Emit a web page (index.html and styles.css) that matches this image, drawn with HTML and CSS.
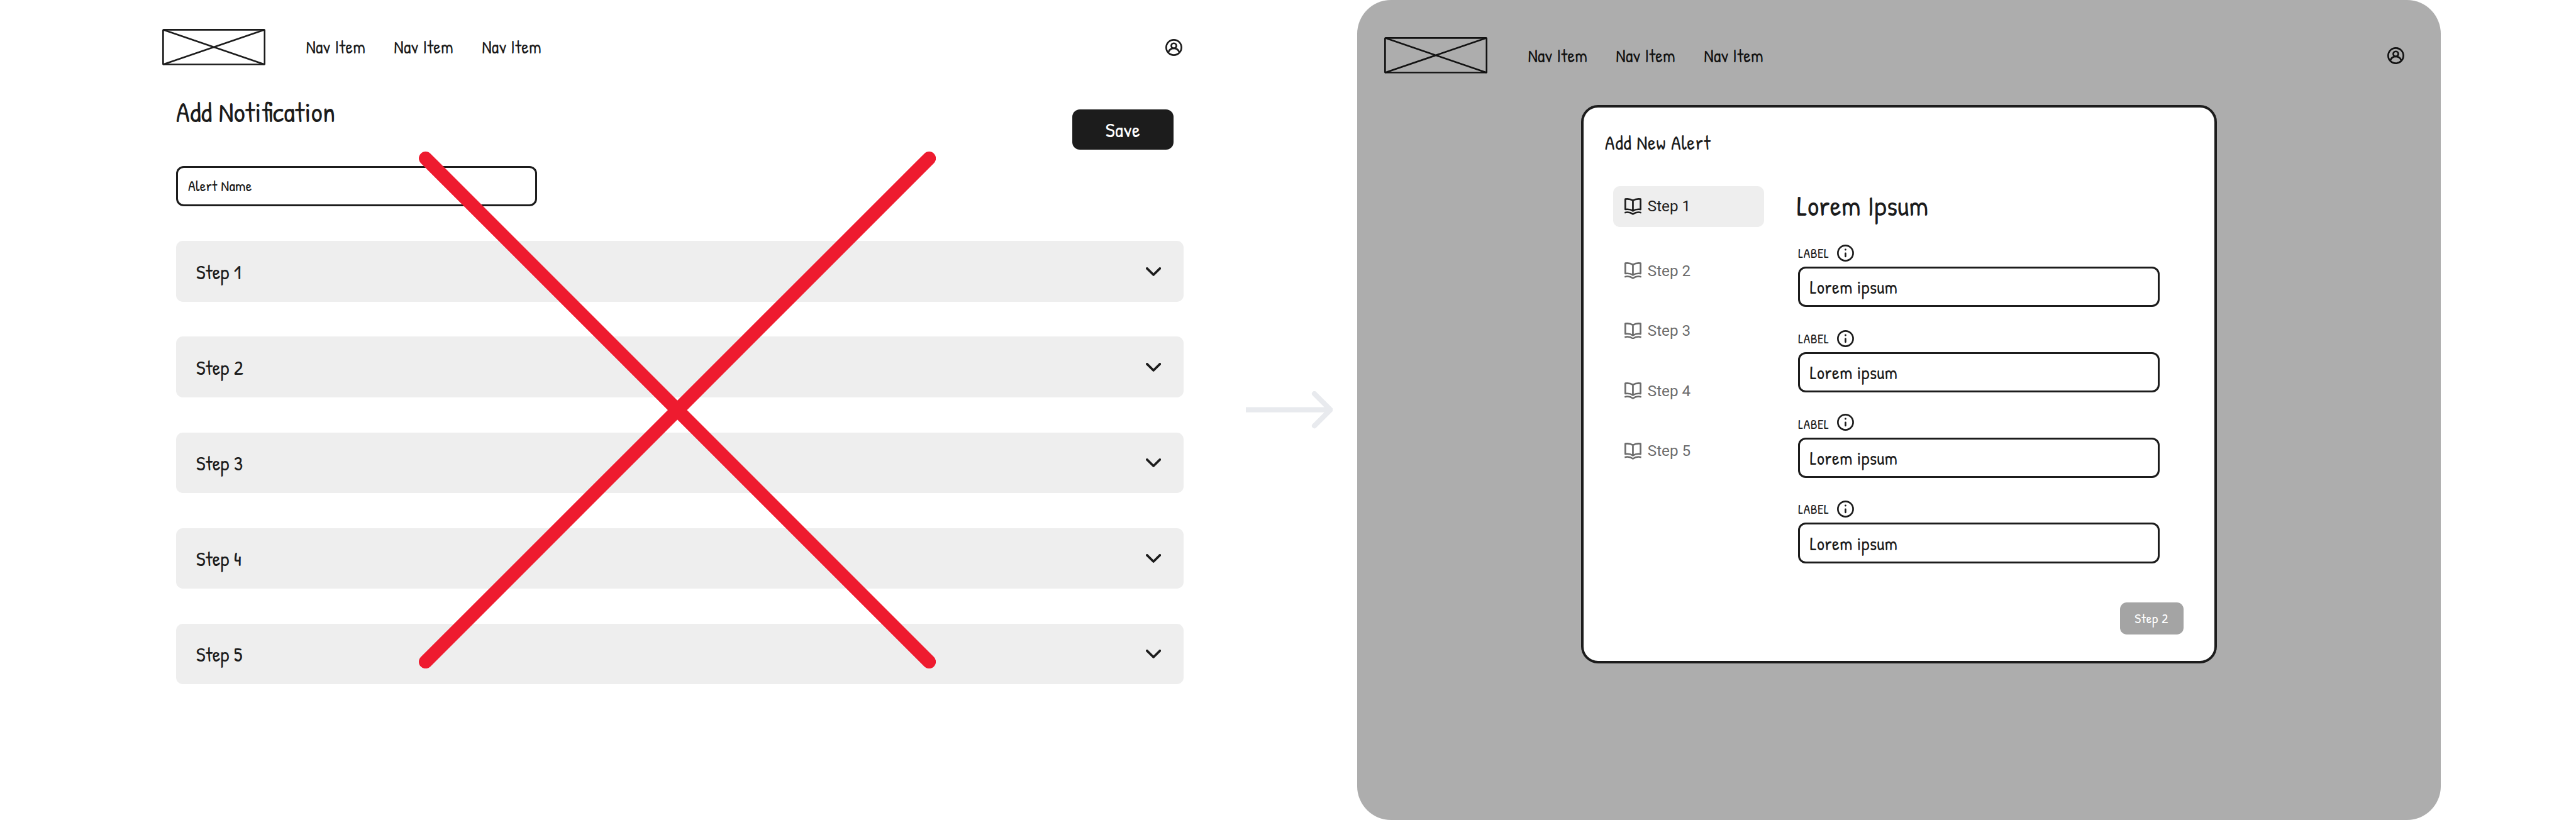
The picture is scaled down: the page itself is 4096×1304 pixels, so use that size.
FILE: index.html
```html
<!DOCTYPE html>
<html lang="en">
<head>
<meta charset="utf-8">
<title>Add alert flow</title>
<link rel="stylesheet" href="styles.css">
</head>
<body>
<svg class="sprite" aria-hidden="true">
  <symbol id="logo" viewBox="0 0 244 86">
    <rect x="2" y="2" width="240" height="82" rx="2" fill="none" stroke="currentColor" stroke-width="4"/>
    <path d="M2 2 242 84M242 2 2 84" stroke="currentColor" stroke-width="4"/>
  </symbol>
  <symbol id="user" viewBox="0 0 20 20">
    <g fill="none" stroke="currentColor" stroke-width="2">
      <circle cx="10" cy="10" r="9"/>
      <circle cx="10" cy="8" r="3"/>
      <path d="M3.7 15.2C4.8 12.7 7.2 11.1 10 11.1s5.2 1.6 6.3 4.1"/>
    </g>
  </symbol>
  <symbol id="book" viewBox="0 0 20 20">
    <g fill="none" stroke="currentColor" stroke-width="2" stroke-linejoin="round">
      <path d="M10 2.9C7.600 1.400 4.200.7 1 1.200V13.400C4.200 12.900 7.600 13.500 10 15.100 12.400 13.500 15.800 12.900 19 13.400V1.200C15.800.7 12.400 1.400 10 2.900ZM10 2.900V15"/>
      <path d="M.2 17.200C4 16.300 7.300 16.900 10 18.900 12.700 16.900 16 16.300 19.800 17.200" stroke-width="1.900"/>
    </g>
  </symbol>
  <symbol id="info" viewBox="0 0 20 20">
    <circle cx="10" cy="10" r="9" fill="none" stroke="currentColor" stroke-width="2"/>
    <circle cx="10" cy="6" r="1.100" fill="currentColor"/>
    <path d="M10 10.200V14" stroke="currentColor" stroke-width="2" stroke-linecap="round"/>
  </symbol>
  <symbol id="chevron" viewBox="0 0 36 21">
    <path d="M2.800 2.800 18 17.800 33.200 2.800" fill="none" stroke="currentColor" stroke-width="5.500" stroke-linecap="round" stroke-linejoin="round"/>
  </symbol>
</svg>

<main class="board">
  <section class="screen before">
    <header class="topbar">
      <svg class="logo"><use href="#logo"/></svg>
      <nav class="nav"><a>Nav Item</a><a>Nav Item</a><a>Nav Item</a></nav>
      <svg class="icon"><use href="#user"/></svg>
    </header>
    <div class="content">
      <div class="title-row">
        <h1 class="page-title">Add Notification</h1>
        <button class="save">Save</button>
      </div>
      <div class="input alert-name">Alert Name</div>
      <div class="panel">Step 1<svg class="chevron"><use href="#chevron"/></svg></div>
      <div class="panel">Step 2<svg class="chevron"><use href="#chevron"/></svg></div>
      <div class="panel">Step 3<svg class="chevron"><use href="#chevron"/></svg></div>
      <div class="panel">Step 4<svg class="chevron"><use href="#chevron"/></svg></div>
      <div class="panel">Step 5<svg class="chevron"><use href="#chevron"/></svg></div>
    </div>
    <svg class="cross" viewBox="0 0 1222 1222"><path d="M16 16 1206 1206M1206 16 16 1206"/></svg>
  </section>

  <svg class="arrow" viewBox="0 0 206 88"><path d="M0 44H200"/><path d="M162 6 200 44 162 82" stroke-linecap="round"/></svg>

  <section class="screen after">
    <header class="topbar">
      <svg class="logo"><use href="#logo"/></svg>
      <nav class="nav"><a>Nav Item</a><a>Nav Item</a><a>Nav Item</a></nav>
      <svg class="icon"><use href="#user"/></svg>
    </header>
    <div class="modal">
      <h2 class="modal-title">Add New Alert</h2>
      <div class="modal-body">
        <ul class="steps">
          <li class="step active"><svg class="icon"><use href="#book"/></svg>Step 1</li>
          <li class="step"><svg class="icon"><use href="#book"/></svg>Step 2</li>
          <li class="step"><svg class="icon"><use href="#book"/></svg>Step 3</li>
          <li class="step"><svg class="icon"><use href="#book"/></svg>Step 4</li>
          <li class="step"><svg class="icon"><use href="#book"/></svg>Step 5</li>
        </ul>
        <form class="form">
          <h3 class="form-title">Lorem Ipsum</h3>
          <div class="field">
            <div class="label-row"><label>LABEL</label><svg class="icon"><use href="#info"/></svg></div>
            <div class="input">Lorem ipsum</div>
          </div>
          <div class="field">
            <div class="label-row"><label>LABEL</label><svg class="icon"><use href="#info"/></svg></div>
            <div class="input">Lorem ipsum</div>
          </div>
          <div class="field">
            <div class="label-row"><label>LABEL</label><svg class="icon raised"><use href="#info"/></svg></div>
            <div class="input">Lorem ipsum</div>
          </div>
          <div class="field">
            <div class="label-row"><label>LABEL</label><svg class="icon"><use href="#info"/></svg></div>
            <div class="input">Lorem ipsum</div>
          </div>
        </form>
      </div>
      <div class="modal-footer"><button class="next">Step 2</button></div>
    </div>
  </section>
</main>
</body>
</html>
```
FILE: styles.css
```css
/* 1rem is ten design units; the board is 6088 units wide */
html {
  font-size: 6.728px;
}

*,
*::before {
  box-sizing: border-box;
}

body {
  margin: 0;
  background: #fff;
  color: #1c1c1c;
  font-family: "Patrick Hand", Lato, sans-serif;
  overflow: hidden;
}

h1, h2, h3, ul {
  margin: 0;
  padding: 0;
  font-weight: 400;
}

button {
  border: 0;
  padding: 0;
  font-family: inherit;
  color: #fff;
}

svg {
  display: block;
  flex: none;
}

.sprite {
  position: absolute;
  width: 0;
  height: 0;
}

.board {
  display: flex;
  width: 4096px;
  height: 1304px;
  padding-left: 32rem;
}

.screen {
  flex: none;
  width: 256rem;
  height: 100%;
}

/* Top bar */
.topbar {
  display: flex;
  align-items: center;
  height: 8.6rem;
  padding: 0 8.6rem 0 6.4rem;
}

.logo {
  width: 24.4rem;
  height: 8.6rem;
}

.nav {
  display: flex;
  margin: 0.2rem auto 0 9.5rem;
  font-size: 4.3rem;
  letter-spacing: 0.033rem;
  line-height: 6rem;
}

.nav a {
  width: 20.8rem;
  white-space: nowrap;
}

.icon {
  width: 4rem;
  height: 4rem;
}

.topbar .icon {
  margin-top: 0.2rem;
}

/* Accordion screen */
.before {
  position: relative;
  padding-top: 6.8rem;
}

.content {
  margin: 7.1rem 8.2rem 0 9.6rem;
}

.title-row {
  display: flex;
  justify-content: space-between;
  align-items: flex-start;
  padding-right: 2.4rem;
}

.page-title {
  font-size: 6.72rem;
  line-height: 8.1rem;
}

.save {
  width: 24rem;
  height: 9.6rem;
  margin-top: 3.3rem;
  border-radius: 1.8rem;
  background: #1c1c1c;
  font-size: 4.8rem;
  letter-spacing: 0.09rem;
}

.input {
  display: flex;
  align-items: center;
  width: 85.4rem;
  height: 9.6rem;
  padding-left: 2.3rem;
  border: 3px solid #1c1c1c;
  border-radius: 1.8rem;
  background: #fff;
  font-size: 4.4rem;
  letter-spacing: 0.05rem;
}

.alert-name {
  margin-top: 3.8rem;
  padding-left: 2.4rem;
  font-size: 3.6rem;
  letter-spacing: 0.03rem;
}

.panel {
  display: flex;
  align-items: center;
  justify-content: space-between;
  height: 14.4rem;
  margin-top: 8.2rem;
  padding: 0 5.4rem 0 4.75rem;
  border-radius: 1.6rem;
  background: #eee;
  font-size: 4.8rem;
}

.chevron {
  width: 3.6rem;
  height: 2.1rem;
}

.cross {
  position: absolute;
  left: 67rem;
  top: 35.75rem;
  width: 122.2rem;
  height: 122.2rem;
  fill: none;
  stroke: #ee1b2f;
  stroke-width: 32;
  stroke-linecap: round;
}

.arrow {
  align-self: center;
  width: 20.6rem;
  height: 8.8rem;
  margin: 0 5.8rem 0 6.4rem;
  fill: none;
  stroke: #e8eaee;
  stroke-width: 12;
  stroke-linejoin: round;
}

/* Modal screen */
.after {
  padding-top: 8.8rem;
  border-radius: 8rem;
  background: #adadad;
}

.after .topbar {
  color: #121212;
}

.modal {
  width: 150.4rem;
  height: 132rem;
  margin: 7.4rem auto 0;
  padding-top: 5.2rem;
  border: 4px solid #1c1c1c;
  border-radius: 4rem;
  background: #fff;
}

.modal-title {
  margin-left: 5.1rem;
  font-size: 4.8rem;
  letter-spacing: 0.08rem;
  line-height: 6rem;
}

.modal-body {
  display: grid;
  grid-template-columns: 35.8rem 85.4rem;
  column-gap: 8rem;
  margin: 7.4rem 0 0 7rem;
}

.steps {
  display: flex;
  flex-direction: column;
  gap: 4.6rem;
  list-style: none;
}

.step {
  display: flex;
  align-items: center;
  gap: 1.4rem;
  height: 9.6rem;
  padding-left: 2.8rem;
  color: #6b6b6b;
  font: 3.6rem Roboto, sans-serif;
}

.step.active {
  margin-bottom: 1rem;
  border-radius: 1.6rem;
  background: #eee;
  color: #1c1c1c;
}

.form-title {
  margin: 0 0 4.7rem -0.35rem;
  font-size: 6.7rem;
  letter-spacing: 0.03rem;
  line-height: 9.1rem;
}

.field + .field {
  margin-top: 5.4rem;
}

.label-row {
  display: flex;
  align-items: center;
  height: 4rem;
  margin-bottom: 1.2rem;
  font-size: 3.2rem;
  letter-spacing: 0.065rem;
}

.label-row label {
  width: 9.2rem;
}

.raised {
  margin-top: -0.8rem;
}

.modal-footer {
  display: flex;
  justify-content: flex-end;
  margin-top: 9.2rem;
  padding-right: 7.4rem;
}

.next {
  width: 15rem;
  height: 7.6rem;
  border-radius: 1.6rem;
  background: #a4a4a4;
  font-size: 3.2rem;
  letter-spacing: 0.09rem;
}
```
